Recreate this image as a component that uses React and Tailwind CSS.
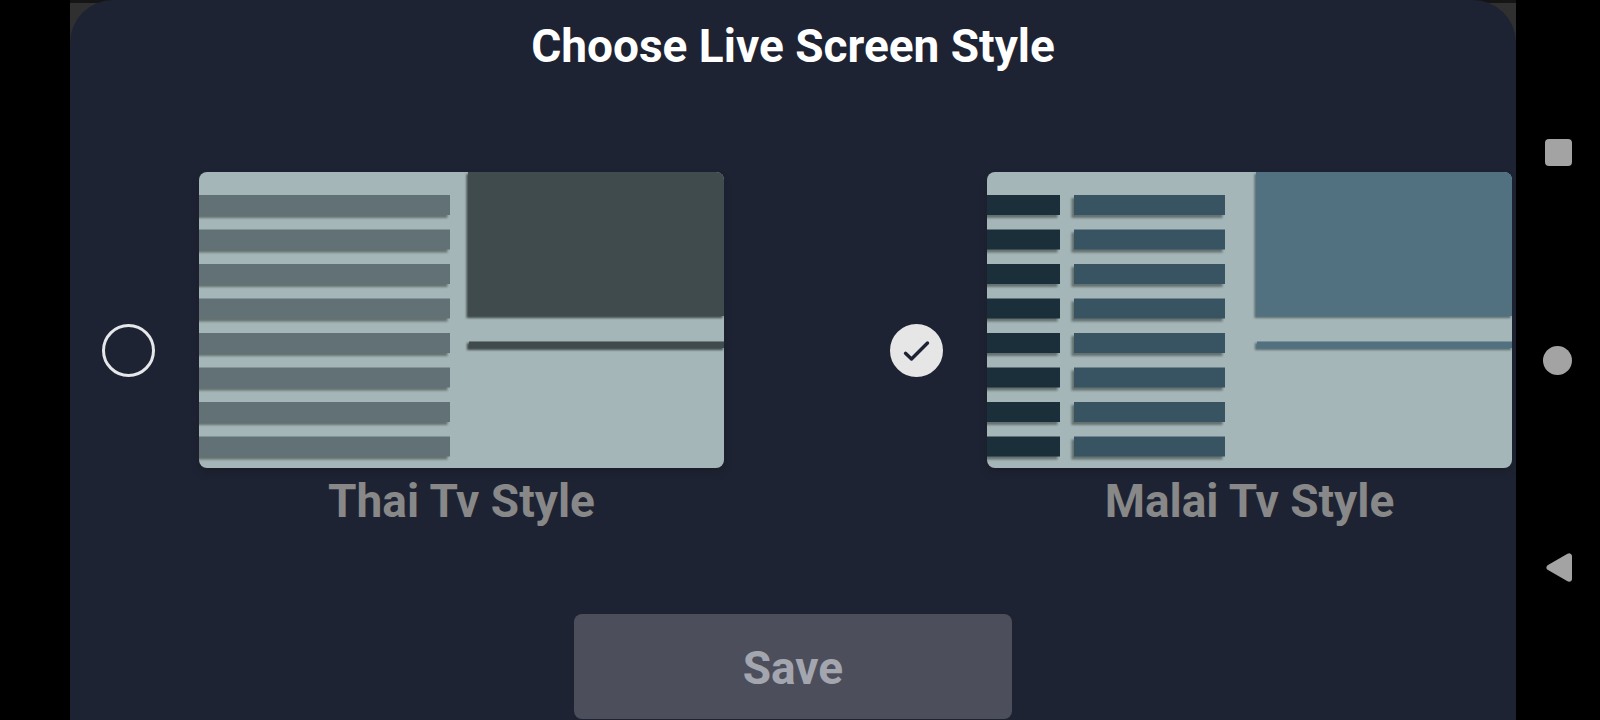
import { useState } from "react";

const ROWS = [23, 57.5, 92, 126.5, 161, 195.5, 230, 264.5];

function Preview({ id, columns, accent }) {
  return (
    <svg
      viewBox="0 0 525 296"
      aria-hidden="true"
      className="block h-auto w-full rounded-lg bg-[#a5b6b9] shadow-[0_5px_8px_rgba(0,0,0,0.15)]"
    >
      <defs>
        <filter id={id} x="-10" y="-10" width="560" height="320" filterUnits="userSpaceOnUse">
          <feGaussianBlur stdDeviation="0.9" />
        </filter>
      </defs>
      <g fill="#63716f" filter={`url(#${id})`}>
        {ROWS.map((y) =>
          columns.map((c) => <rect key={`${c.x}-${y}`} x={c.x - 2.5} y={y + 3} width={c.width} height="20" />)
        )}
      </g>
      {ROWS.map((y) =>
        columns.map((c) => <rect key={`${c.x}-${y}`} x={c.x} y={y} width={c.width} height="20" fill={c.fill} />)
      )}
      <g fill={accent.shadow} filter={`url(#${id})`}>
        <rect x="267.5" y="2" width="256" height="144" />
        <rect x="268" y="171" width="256" height="7" />
      </g>
      <g fill={accent.fill}>
        <rect x="269" y="0" width="256" height="144" />
        <rect x="270" y="169.5" width="255" height="6.5" />
      </g>
    </svg>
  );
}

const STYLES = [
  {
    value: "thai",
    label: "Thai Tv Style",
    columns: [{ x: -5, width: 256, fill: "#627175" }],
    accent: { fill: "#404b4d", shadow: "#404b4b" },
  },
  {
    value: "malai",
    label: "Malai Tv Style",
    columns: [
      { x: -5, width: 78, fill: "#1a2f39" },
      { x: 87, width: 151, fill: "#385462" },
    ],
    accent: { fill: "#517080", shadow: "#566b6f" },
  },
];

function StyleOption({ option, checked, onSelect }) {
  return (
    <label className="flex flex-1 items-center gap-11 pl-8">
      <span className="grid size-[53px] shrink-0 place-items-center">
        <input
          type="radio"
          name="live-style"
          value={option.value}
          checked={checked}
          onChange={onSelect}
          className="col-start-1 row-start-1 size-full appearance-none rounded-full border-3 border-[#e6e7ea] checked:border-[#e6e6e6] checked:bg-[#e6e6e6]"
        />
        {checked && (
          <svg viewBox="0 0 53 53" aria-hidden="true" className="pointer-events-none col-start-1 row-start-1 size-full">
            <path
              d="M15.5 29.3 21.5 35 37.5 19"
              fill="none"
              stroke="#1e2333"
              strokeWidth="3.4"
              strokeLinecap="round"
              strokeLinejoin="round"
            />
          </svg>
        )}
      </span>
      <span className="flex-1">
        <Preview id={`soft-${option.value}`} columns={option.columns} accent={option.accent} />
        <span className="block pt-1.5 pb-0.5 text-center text-[46px] leading-[54px] font-bold text-[#888888]">
          {option.label}
        </span>
      </span>
    </label>
  );
}

function NavButton({ label, children }) {
  return (
    <button type="button" aria-label={label} className="flex h-[207px] items-center justify-center">
      <svg viewBox="0 0 30 30" aria-hidden="true" className="size-[30px]" fill="#a3a3a3">
        {children}
      </svg>
    </button>
  );
}

export default function App() {
  const [selected, setSelected] = useState("malai");
  return (
    <div className="flex min-h-screen bg-black pl-[70px] font-['Roboto',sans-serif]">
      <div className="flex flex-1 bg-linear-to-b from-[#151515] from-[3px] to-[#303030] to-[3px]">
        <main className="flex flex-1 flex-col items-center rounded-t-[43px] bg-[#1e2333] pt-[19px] pb-px">
          <h1 className="text-[46px] leading-[54px] font-bold text-white">Choose Live Screen Style</h1>
          <div
            role="radiogroup"
            aria-label="Live screen style"
            className="flex w-full flex-1 items-center gap-[134px] pt-3.5 pr-1"
          >
            {STYLES.map((option) => (
              <StyleOption
                key={option.value}
                option={option}
                checked={selected === option.value}
                onSelect={() => setSelected(option.value)}
              />
            ))}
          </div>
          <button
            type="button"
            className="h-[105px] w-[438px] rounded-lg bg-[#4c4f5b] pt-0.5 text-[46px] leading-[54px] font-bold text-[#a4a6af]"
          >
            Save
          </button>
        </main>
      </div>
      <nav aria-label="System" className="flex w-[84px] flex-col justify-center">
        <NavButton label="Recent apps">
          <rect x="2" y="1" width="27" height="27" rx="4" />
        </NavButton>
        <NavButton label="Home">
          <circle cx="14.5" cy="15.5" r="14.5" />
        </NavButton>
        <NavButton label="Back">
          <path
            d="M6.5 15.5 26 4.3V26.7Z"
            stroke="#a3a3a3"
            strokeWidth="6"
            strokeLinejoin="round"
          />
        </NavButton>
      </nav>
    </div>
  );
}
